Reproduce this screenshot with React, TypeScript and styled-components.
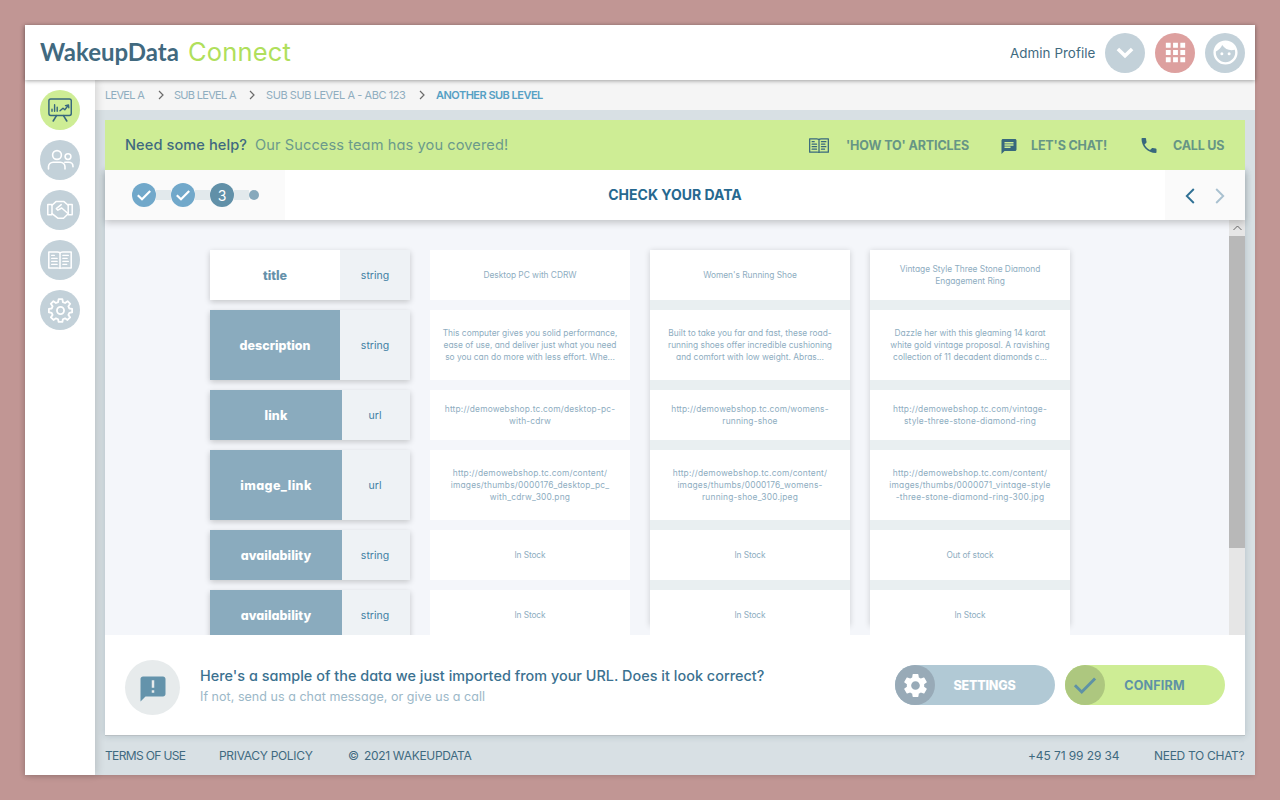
import React from 'react';
import styled, { createGlobalStyle } from 'styled-components';
import { MdAnnouncement, MdApps, MdChat, MdFace, MdPhone, MdSettings } from 'react-icons/md';

const Global = createGlobalStyle`
  * { box-sizing: border-box; }
  body {
    margin: 0;
    background: #c19694;
    font-family: Inter, "Open Sans", sans-serif;
    font-feature-settings: "cv11";
    color: #3f6a80;
  }
`;

const Page = styled.div`
  height: 800px;
  padding: 25px;
`;
const Shell = styled.div`
  display: flex;
  flex-direction: column;
  width: 1230px;
  height: 750px;
  background: #d8e0e4;
  box-shadow: -1px 1px 5px rgba(0, 0, 0, 0.16);
`;
/* One run of text held to the slot the layout gives it. */
const Label = styled.span<{ $w?: number; $size: number; $ls?: number; $weight?: number; $color?: string; $ml?: number }>`
  flex: none;
  width: ${p => (p.$w ? `${p.$w}px` : 'auto')};
  margin-left: ${p => p.$ml ?? 0}px;
  font-size: ${p => p.$size}px;
  font-weight: ${p => p.$weight ?? 400};
  letter-spacing: ${p => p.$ls ?? 0}px;
  color: ${p => p.$color ?? 'inherit'};
  white-space: nowrap;
`;

const Header = styled.header`
  position: relative;
  z-index: 3;
  flex: none;
  display: flex;
  align-items: center;
  height: 55px;
  padding: 0 10px 0 15px;
  background: #fff;
  box-shadow: 0 1px 4px rgba(0, 0, 0, 0.35);
`;
const Brand = styled.div`
  display: flex;
  align-items: center;
  flex: 1;
  height: 100%;
  padding-bottom: 2px;
`;
const BrandName = styled(Label)`
  font-family: Lato, sans-serif;
  padding-bottom: 1px;
`;
const Round = styled.button<{ $bg: string; $fg?: string }>`
  flex: none;
  display: flex;
  align-items: center;
  justify-content: center;
  width: 40px;
  height: 40px;
  padding: 0;
  border: 0;
  border-radius: 50%;
  background: ${p => p.$bg};
  color: ${p => p.$fg ?? '#fff'};
`;
const HeaderActions = styled.div`
  display: flex;
  gap: 10px;
  margin-left: 10px;
`;

const Body = styled.div`
  display: flex;
  flex: 1;
  min-height: 0;
`;
const Sidebar = styled.nav`
  position: relative;
  z-index: 2;
  flex: none;
  display: flex;
  flex-direction: column;
  align-items: center;
  gap: 10px;
  width: 70px;
  padding-top: 10px;
  background: #fff;
  box-shadow: 2px 0 8px rgba(0, 0, 0, 0.14);
`;
const Main = styled.main`
  flex: 1;
  display: flex;
  flex-direction: column;
  min-width: 0;
`;
const Crumbs = styled.div`
  display: flex;
  align-items: center;
  height: 30px;
  padding-left: 10px;
  background: #f5f5f5;
`;
const CrumbArrow = styled.svg`
  flex: none;
  width: 6px;
  height: 10px;
`;
const Content = styled.div`
  flex: 1;
  display: flex;
  flex-direction: column;
  padding: 10px 10px 0;
`;
const HelpBar = styled.div`
  position: relative;
  z-index: 2;
  flex: none;
  display: flex;
  align-items: center;
  height: 50px;
  padding-left: 20px;
  background: #ceed95;
`;
const HelpText = styled.p`
  display: flex;
  align-items: center;
  margin: 0;
  padding-bottom: 1px;
`;
const HelpLinks = styled.div`
  display: flex;
  align-items: center;
  margin-left: auto;
`;
const IconSlot = styled.span<{ $w: number; $mr: number; $down?: number }>`
  display: flex;
  justify-content: center;
  width: ${p => p.$w}px;
  margin-right: ${p => p.$mr}px;
  padding-top: ${p => p.$down ?? 0}px;
  color: #38687d;
`;
const Panel = styled.section`
  display: flex;
  flex-direction: column;
  height: 566px;
  box-shadow: 0 0 7px rgba(30, 60, 80, 0.2);
`;
const StepBar = styled.div`
  position: relative;
  z-index: 1;
  flex: none;
  display: flex;
  height: 50px;
  background: #fff;
  box-shadow: 0 3px 7px rgba(0, 0, 0, 0.2);
`;
const Steps = styled.div`
  display: flex;
  align-items: center;
  width: 180px;
  padding-left: 27px;
  background: #fafafa;
`;
const Step = styled.span<{ $bg: string; $size?: number }>`
  display: flex;
  align-items: center;
  justify-content: center;
  width: ${p => p.$size ?? 24}px;
  height: ${p => p.$size ?? 24}px;
  border-radius: 50%;
  background: ${p => p.$bg};
  color: #fff;
  font-size: 14px;
`;
const StepLink = styled.span`
  width: 15px;
  height: 10px;
  background: #e2e9ec;
`;
const StepTitle = styled.div`
  flex: 1;
  display: flex;
  align-items: center;
  justify-content: center;
  padding: 0 100px 1px 0;
`;
const StepNav = styled.div`
  display: flex;
  align-items: center;
  gap: 20px;
  width: 80px;
  padding: 1px 0 0 20px;
  background: #fafafa;
`;

const Viewport = styled.div`
  flex: none;
  display: flex;
  height: 415px;
  background: #f4f6fa;
  overflow: hidden;
`;
const Table = styled.div`
  flex: 1;
  display: flex;
  gap: 20px;
  height: 415px;
  padding: 30px 0 0 105px;
  overflow: hidden;
`;
const FieldColumn = styled.div`
  display: flex;
  flex-direction: column;
  gap: 10px;
  width: 200px;
`;
const SampleColumn = styled(FieldColumn)<{ $raised: boolean }>`
  height: 375px;
  background: ${p => (p.$raised ? '#e9eff1' : 'transparent')};
  box-shadow: ${p => (p.$raised ? '0 1px 6px rgba(0, 0, 0, 0.17)' : 'none')};
`;
const FieldRow = styled.div<{ $h: number }>`
  flex: none;
  display: flex;
  height: ${p => p.$h}px;
  box-shadow: 0 2px 6px rgba(0, 0, 0, 0.2);
`;
const FieldName = styled.div<{ $w: number; $first: boolean }>`
  display: flex;
  align-items: center;
  justify-content: center;
  width: ${p => p.$w}px;
  background: ${p => (p.$first ? '#fff' : '#8aabbe')};
  color: ${p => (p.$first ? '#6591aa' : '#fff')};
`;
const FieldType = styled.div<{ $wide: boolean }>`
  flex: 1;
  display: flex;
  align-items: center;
  justify-content: center;
  padding-right: ${p => (p.$wide ? 0 : 2)}px;
  background: #eef2f5;
  color: #4180a3;
`;
const Sample = styled.div<{ $h: number }>`
  flex: none;
  display: flex;
  flex-direction: column;
  align-items: center;
  justify-content: center;
  height: ${p => p.$h}px;
  background: #fff;
  color: #8eadbf;
  line-height: 12px;
`;
const Scrollbar = styled.div`
  flex: none;
  width: 16px;
  background: #e6e6e6;
`;
const ScrollUp = styled.div`
  display: flex;
  align-items: center;
  justify-content: center;
  height: 16px;
`;
const Thumb = styled.div`
  height: 312px;
  background: #b8b8b8;
`;

const Prompt = styled.div`
  flex: 1;
  display: flex;
  align-items: center;
  padding: 0 20px;
  background: #fff;
  border-bottom: 1px solid #b9c0c4;
`;
const PromptIcon = styled.div`
  display: flex;
  align-items: center;
  justify-content: center;
  width: 55px;
  height: 55px;
  margin: 5px 20px 0 0;
  padding-top: 2px;
  border-radius: 50%;
  background: #e7ebec;
  color: #6493ab;
`;
const PromptText = styled.div`
  display: flex;
  flex-direction: column;
  gap: 4px;
  flex: 1;
  padding-top: 2px;
  line-height: 17px;
`;
const Actions = styled.div`
  display: flex;
  gap: 10px;
`;
const Pill = styled.button<{ $bg: string; $fg: string }>`
  display: flex;
  align-items: center;
  width: 160px;
  height: 40px;
  padding: 0;
  border: 0;
  border-radius: 20px;
  background: ${p => p.$bg};
  color: ${p => p.$fg};
  font-family: inherit;
  font-feature-settings: inherit;
`;
const PillText = styled.span`
  flex: 1;
  display: flex;
  justify-content: center;
  padding-right: 21px;
`;
const Footer = styled.footer`
  display: flex;
  align-items: center;
  height: 39px;
  padding-bottom: 1px;
`;

const line = { fill: 'none', stroke: 'currentColor', strokeLinecap: 'round', strokeLinejoin: 'round' } as const;

const Board = () => (
  <svg width="24" height="26" viewBox="0 0 24 26" {...line} strokeWidth="1.5">
    <rect x="0.9" y="2" width="22.4" height="16.4" rx="1.8" />
    <path d="M8.5 18.6 5.2 24M15.5 18.6 18.8 24" strokeWidth="1.6" />
    <path d="M4 14.200v-2M6.600 14.200V7.800M9.200 14.200v-4" strokeWidth="1.4" />
    <path d="M12 13.800l3-2.600 1.800 1.600 3.200-4M17.500 8.600l3-.6.3 2.800" strokeWidth="1.4" />
  </svg>
);
const People = () => (
  <svg width="27" height="22" viewBox="0 0 27 22" {...line} strokeWidth="1.6">
    <circle cx="10" cy="6" r="4.4" />
    <circle cx="21" cy="7.6" r="2.9" />
    <path d="M1.5 20v-2.200a4.600 4.600 0 0 1 4.600-4.600h7.300a4.600 4.600 0 0 1 4.600 4.600V20M17.800 13.200h4a4.200 4.200 0 0 1 4.200 4.200v.4" />
  </svg>
);
const Handshake = () => (
  <svg width="26" height="20" viewBox="0 0 26 20" {...line} strokeWidth="1.5">
    <path d="M.8 4.400H5v10.400H.8zM25.200 4.400H21.200v10.400h4z" />
    <path d="M5 5.200 9 1.600h8l4.200 3.600M5 13.600l5.800 4.600h5.700l4.700-4.400" />
    <path d="M14.200 4.600 9.300 8.700l1.600 1.500 3.800-2.200 5.700 5" />
  </svg>
);
const Book = ({ w = 24, h = 18 }: { w?: number; h?: number }) => (
  <svg width={w} height={h} viewBox="0 0 24 18" {...line} strokeWidth="1.5">
    <path d="M.8 1h8.600c1.400 0 2.600.5 2.600 1.400 0-.9 1.200-1.400 2.600-1.400h8.600v16h-8.600c-1.400 0-2.600.2-2.600.8 0-.6-1.200-.8-2.600-.8H.8zM12 2.600v15" />
    <path d="M3.700 4.400h2.600M3.700 7.400h5.400M3.700 10.400h5.400M3.700 13.400h5.400M14.900 4.400h5.400M14.900 7.400h4.200M14.900 10.400h5.400M14.900 13.400h3.800" strokeWidth="1.4" />
  </svg>
);
const Gear = () => (
  <svg width="25" height="25" viewBox="0 0 24 24" {...line} strokeWidth="1.75">
    <circle cx="12" cy="12" r="3.4" />
    <path d="M10.200 1h3.600l.5 2.900 2.100.9 2.400-1.700 2.500 2.500-1.700 2.400.9 2.100 2.700.4v3.200l-2.700.5-.9 2.100 1.600 2.300-2.500 2.500-2.300-1.600-2.100.9-.5 2.600h-3.600l-.5-2.600-2.100-.9-2.300 1.600-2.500-2.500 1.600-2.300-.9-2.100-2.700-.5v-3.200l2.700-.4.9-2.100-1.700-2.400 2.500-2.500 2.400 1.700 2.100-.9z" />
  </svg>
);
const Check = ({ size = 16, weight = 2.2 }: { size?: number; weight?: number }) => (
  <svg width={size} height={size} viewBox="0 0 16 16" {...line} strokeLinecap="butt" strokeLinejoin="miter" strokeWidth={weight}>
    <path d="M1.800 8.200 6 12.300 14.200 4" />
  </svg>
);
const Separator = () => (
  <CrumbArrow viewBox="0 0 6 10" fill="none" stroke="#6b6b6b" strokeWidth="1.2">
    <path d="M1 1l4 4-4 4" />
  </CrumbArrow>
);

const heights = [50, 70, 50, 70, 50, 50];
/* Addresses are tracked wider than prose; stock states a little tighter. */
const tracking = [-0.03, 0, 0.17, 0.2, -0.12, -0.12];
const fields = [
  { name: 'title', type: 'string', w: 130, ls: 0 },
  { name: 'description', type: 'string', w: 130, ls: 0 },
  { name: 'link', type: 'url', w: 132, ls: 0.1 },
  { name: 'image_link', type: 'url', w: 132, ls: 0.4 },
  { name: 'availability', type: 'string', w: 132, ls: 0.05 },
  { name: 'availability', type: 'string', w: 132, ls: 0.05 },
];
const samples: string[][][] = [
  [
    ['Desktop PC with CDRW'],
    ['This computer gives you solid performance,', 'ease of use, and deliver just what you need', 'so you can do more with less effort. Whe...'],
    ['http://demowebshop.tc.com/desktop-pc-', 'with-cdrw'],
    ['http://demowebshop.tc.com/content/', 'images/thumbs/0000176_desktop_pc_', 'with_cdrw_300.png'],
    ['In Stock'],
    ['In Stock'],
  ],
  [
    ["Women's Running Shoe"],
    ['Built to take you far and fast, these road-', 'running shoes offer incredible cushioning', 'and comfort with low weight. Abras...'],
    ['http://demowebshop.tc.com/womens-', 'running-shoe'],
    ['http://demowebshop.tc.com/content/', 'images/thumbs/0000176_womens-', 'running-shoe_300.jpeg'],
    ['In Stock'],
    ['In Stock'],
  ],
  [
    ['Vintage Style Three Stone Diamond', 'Engagement Ring'],
    ['Dazzle her with this gleaming 14 karat', 'white gold vintage proposal. A ravishing', 'collection of 11 decadent diamonds c...'],
    ['http://demowebshop.tc.com/vintage-', 'style-three-stone-diamond-ring'],
    ['http://demowebshop.tc.com/content/', 'images/thumbs/0000071_vintage-style', '-three-stone-diamond-ring-300.jpg'],
    ['Out of stock'],
    ['In Stock'],
  ],
];

export default function App() {
  return (
    <Page>
      <Global />
      <Shell>
        <Header>
          <Brand>
            <BrandName $w={148} $size={24} $weight={700} $color="#41697f">WakeupData</BrandName>
            <Label $size={25.5} $ls={0.15} $color="#b0df5c">Connect</Label>
          </Brand>
          <Label $w={85} $size={13.4} $ls={0.05}>Admin Profile</Label>
          <HeaderActions>
            <Round $bg="#c3d1d9" aria-label="Open profile menu">
              <svg width="18" height="12" viewBox="0 0 18 12" fill="none" stroke="currentColor" strokeWidth="3.6">
                <path d="M1.900 2 9 8.800 16.100 2" />
              </svg>
            </Round>
            <Round $bg="#dda09f" aria-label="Apps"><MdApps size={29} /></Round>
            <Round $bg="#c3d1d9" aria-label="Account"><MdFace size={29} /></Round>
          </HeaderActions>
        </Header>
        <Body>
          <Sidebar>
            <Round $bg="#ceed95" $fg="#38687d" aria-label="Dashboard"><Board /></Round>
            <Round $bg="#c3d1d9" aria-label="People"><People /></Round>
            <Round $bg="#c3d1d9" aria-label="Partners"><Handshake /></Round>
            <Round $bg="#c3d1d9" aria-label="Guides"><Book /></Round>
            <Round $bg="#c3d1d9" aria-label="Settings"><Gear /></Round>
          </Sidebar>
          <Main>
            <Crumbs>
              <Label $w={53} $size={11} $ls={-0.7} $color="#8fadbf">LEVEL A</Label>
              <Separator />
              <Label $ml={10} $w={75} $size={11} $ls={-0.7} $color="#8fadbf">SUB LEVEL A</Label>
              <Separator />
              <Label $ml={11} $w={153} $size={11} $ls={-0.43} $color="#8fadbf">SUB SUB LEVEL A - ABC 123</Label>
              <Separator />
              <Label $ml={11} $size={11} $weight={600} $ls={-0.52} $color="#56a0c4">ANOTHER SUB LEVEL</Label>
            </Crumbs>
            <Content>
              <HelpBar>
                <HelpText>
                  <Label $w={130} $size={14.6} $weight={500} $ls={0.08}>Need some help?</Label>
                  <Label $size={14.6} $ls={0.1} $color="#6b9a8b">Our Success team has you covered!</Label>
                </HelpText>
                <HelpLinks>
                  <IconSlot $w={20} $mr={17}><Book w={20} h={15} /></IconSlot>
                  <Label $w={154} $size={12.5} $weight={700} $ls={-0.12} $color="#669585">'HOW TO' ARTICLES</Label>
                  <IconSlot $w={18} $mr={13} $down={3}><MdChat size={19} /></IconSlot>
                  <Label $w={108} $size={12.5} $weight={700} $ls={-0.15} $color="#669585">LET'S CHAT!</Label>
                  <IconSlot $w={20} $mr={14} $down={1}><MdPhone size={21} /></IconSlot>
                  <Label $w={72} $size={12.5} $weight={700} $ls={-0.2} $color="#669585">CALL US</Label>
                </HelpLinks>
              </HelpBar>
              <Panel>
                <StepBar>
                  <Steps>
                    <Step $bg="#71a8ca"><Check /></Step>
                    <StepLink />
                    <Step $bg="#71a8ca"><Check /></Step>
                    <StepLink />
                    <Step $bg="#6190a8">3</Step>
                    <StepLink />
                    <Step $bg="#87a9bc" $size={10} />
                  </Steps>
                  <StepTitle>
                    <Label $size={14} $weight={700} $color="#26688f">CHECK YOUR DATA</Label>
                  </StepTitle>
                  <StepNav>
                    <svg width="10" height="16" viewBox="0 0 10 16" fill="none" stroke="#2f7094" strokeWidth="1.9"><path d="M8.800 1 1.800 8l7 7" /></svg>
                    <svg width="10" height="16" viewBox="0 0 10 16" fill="none" stroke="#a9c1d0" strokeWidth="1.9"><path d="M1.200 1l7 7-7 7" /></svg>
                  </StepNav>
                </StepBar>
                <Viewport>
                  <Table>
                    <FieldColumn>
                      {fields.map((f, i) => (
                        <FieldRow key={i} $h={heights[i]}>
                          <FieldName $w={f.w} $first={i === 0}>
                            <Label $size={12.5} $weight={800} $ls={f.ls}>{f.name}</Label>
                          </FieldName>
                          <FieldType $wide={f.w === 130}><Label $size={10.5}>{f.type}</Label></FieldType>
                        </FieldRow>
                      ))}
                    </FieldColumn>
                    {samples.map((column, c) => (
                      <SampleColumn key={c} $raised={c > 0}>
                        {column.map((lines, i) => (
                          <Sample key={i} $h={heights[i]}>
                            {lines.map(text => <Label key={text} $size={8.4} $ls={tracking[i]}>{text}</Label>)}
                          </Sample>
                        ))}
                      </SampleColumn>
                    ))}
                  </Table>
                  <Scrollbar>
                    <ScrollUp>
                      <svg width="9" height="6" viewBox="0 0 9 6" fill="none" stroke="#666" strokeWidth="1"><path d="M.5 5l4-4 4 4" /></svg>
                    </ScrollUp>
                    <Thumb />
                  </Scrollbar>
                </Viewport>
                <Prompt>
                  <PromptIcon><MdAnnouncement size={30} /></PromptIcon>
                  <PromptText>
                    <Label $size={14.4} $weight={500} $ls={0.03} $color="#3b7190">Here's a sample of the data we just imported from your URL. Does it look correct?</Label>
                    <Label $size={12.5} $ls={0.04} $color="#9cb8c8">If not, send us a chat message, or give us a call</Label>
                  </PromptText>
                  <Actions>
                    <Pill $bg="#b1c9d5" $fg="#fff">
                      <Round as="span" $bg="#98aab7"><MdSettings size={29} /></Round>
                      <PillText><Label $size={12.5} $weight={800} $ls={-0.2}>SETTINGS</Label></PillText>
                    </Pill>
                    <Pill $bg="#ceed95" $fg="#5e92a6">
                      <Round as="span" $bg="#adc77f" $fg="#5e92a6"><Check size={26} weight={1.8} /></Round>
                      <PillText><Label $size={12.5} $weight={700} $ls={0.2}>CONFIRM</Label></PillText>
                    </Pill>
                  </Actions>
                </Prompt>
              </Panel>
              <Footer>
                <Label $w={114} $size={12} $ls={-0.65}>TERMS OF USE</Label>
                <Label $w={129} $size={12} $ls={-0.32}>PRIVACY POLICY</Label>
                <Label $w={16} $size={12}>©</Label>
                <Label $size={12} $ls={-0.32}>2021 WAKEUPDATA</Label>
                <HelpLinks>
                  <Label $w={126} $size={12} $ls={-0.1}>+45 71 99 29 34</Label>
                  <Label $w={91} $size={12} $ls={-0.3}>NEED TO CHAT?</Label>
                </HelpLinks>
              </Footer>
            </Content>
          </Main>
        </Body>
      </Shell>
    </Page>
  );
}
